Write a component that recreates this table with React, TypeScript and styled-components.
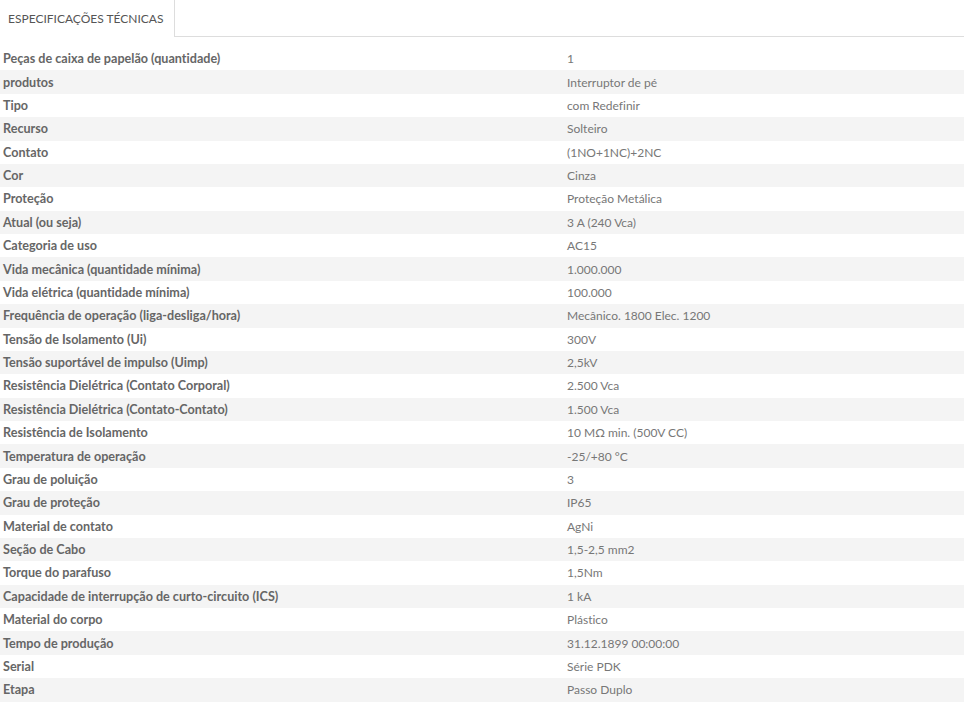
import styled, { createGlobalStyle } from 'styled-components';

const GlobalStyle = createGlobalStyle`
  html, body {
    margin: 0;
    padding: 0;
    background: #fff;
  }
  body {
    font-family: Lato, "Open Sans", "Liberation Sans", sans-serif;
    font-size: 12px;
    font-variant-ligatures: none;
  }
`;

const Wrapper = styled.div`
  width: 964px;
`;

const TabBar = styled.div`
  display: flex;
  height: 36px;
  border-bottom: 1px solid #dddddd;
`;

const Tab = styled.div`
  display: flex;
  align-items: center;
  padding: 0 0 0 8px;
  width: 175px;
  box-sizing: border-box;
  margin-bottom: -1px;
  background: #fff;
  border-right: 1px solid #dddddd;
  color: #555;
  font-size: 12px;
  white-space: nowrap;
  text-transform: uppercase;
`;

const Table = styled.div`
  margin-top: 10px;
  display: flex;
  flex-direction: column;
`;

const Row = styled.div<{ $striped: boolean }>`
  display: grid;
  grid-template-columns: 564px 1fr;
  height: 23.38px;
  align-items: center;
  background: ${(p) => (p.$striped ? '#f4f4f4' : '#fff')};
`;

const Label = styled.div`
  padding-left: 3px;
  font-size: 12.6px;
  font-weight: 700;
  color: #666;
`;

const Value = styled.div`
  padding-left: 3px;
  color: #777;
`;

const specs: [string, string][] = [
  ['Peças de caixa de papelão (quantidade)', '1'],
  ['produtos', 'Interruptor de pé'],
  ['Tipo', 'com Redefinir'],
  ['Recurso', 'Solteiro'],
  ['Contato', '(1NO+1NC)+2NC'],
  ['Cor', 'Cinza'],
  ['Proteção', 'Proteção Metálica'],
  ['Atual (ou seja)', '3 A (240 Vca)'],
  ['Categoria de uso', 'AC15'],
  ['Vida mecânica (quantidade mínima)', '1.000.000'],
  ['Vida elétrica (quantidade mínima)', '100.000'],
  ['Frequência de operação (liga-desliga/hora)', 'Mecânico. 1800 Elec. 1200'],
  ['Tensão de Isolamento (Ui)', '300V'],
  ['Tensão suportável de impulso (Uimp)', '2,5kV'],
  ['Resistência Dielétrica (Contato Corporal)', '2.500 Vca'],
  ['Resistência Dielétrica (Contato-Contato)', '1.500 Vca'],
  ['Resistência de Isolamento', '10 MΩ min. (500V CC)'],
  ['Temperatura de operação', '-25/+80 °C'],
  ['Grau de poluição', '3'],
  ['Grau de proteção', 'IP65'],
  ['Material de contato', 'AgNi'],
  ['Seção de Cabo', '1,5-2,5 mm2'],
  ['Torque do parafuso', '1,5Nm'],
  ['Capacidade de interrupção de curto-circuito (ICS)', '1 kA'],
  ['Material do corpo', 'Plástico'],
  ['Tempo de produção', '31.12.1899 00:00:00'],
  ['Serial', 'Série PDK'],
  ['Etapa', 'Passo Duplo'],
];

const App = () => {
  return (
    <Wrapper>
      <GlobalStyle />
      <TabBar>
        <Tab>Especificações Técnicas</Tab>
      </TabBar>
      <Table>
        {specs.map(([label, value], i) => (
          <Row key={label} $striped={i % 2 === 1}>
            <Label>{label}</Label>
            <Value>{value}</Value>
          </Row>
        ))}
      </Table>
    </Wrapper>
  );
};

export default App;
